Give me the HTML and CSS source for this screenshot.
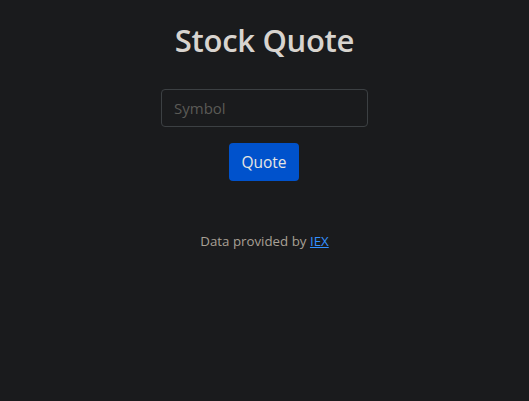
FILE: index.html
```html
<!DOCTYPE html>
<html>
<head>
<meta charset="utf-8">
<link rel="stylesheet" href="styles.css">
</head>
<body>
<main class="page">
  <h1 class="title">Stock Quote</h1>
  <form class="form">
    <input class="field" type="text" placeholder="Symbol">
    <button class="btn" type="button">Quote</button>
  </form>
  <p class="credit">Data provided by <a href="#" class="link">IEX</a></p>
</main>
</body>
</html>
```
FILE: styles.css
```css
html, body {
  margin: 0;
  padding: 0;
  background: #1a1b1d;
  height: 100%;
}
body {
  font-family: "Open Sans", "Noto Sans", sans-serif;
  color: #d8d4cf;
}
.page {
  display: flex;
  flex-direction: column;
  align-items: center;
  padding-top: 20px;
}
.title {
  margin: 0;
  font-size: 31px;
  font-weight: 600;
  line-height: 40px;
  color: #d8d4cf;
  letter-spacing: -0.3px;
}
.form {
  display: flex;
  flex-direction: column;
  align-items: center;
  gap: 16px;
  margin-top: 29px;
}
.field {
  box-sizing: border-box;
  width: 207px;
  height: 38px;
  padding: 6px 12px;
  background: #1a1b1d;
  border: 1px solid #3c4043;
  border-radius: 4px;
  font-family: inherit;
  font-size: 15px;
  color: #d8d4cf;
  outline: none;
}
.field::placeholder {
  color: #5b5a56;
}
.btn {
  box-sizing: border-box;
  width: 70px;
  height: 38px;
  background: #0052cc;
  border: none;
  border-radius: 4px;
  color: #e8e6e3;
  font-family: inherit;
  font-size: 15.5px;
  padding: 0;
  margin-left: -1px;
}
.credit {
  margin: 51px 0 0;
  font-size: 13.3px;
  color: #a8a095;
}
.link {
  color: #3391ff;
  text-decoration: underline;
}
```
